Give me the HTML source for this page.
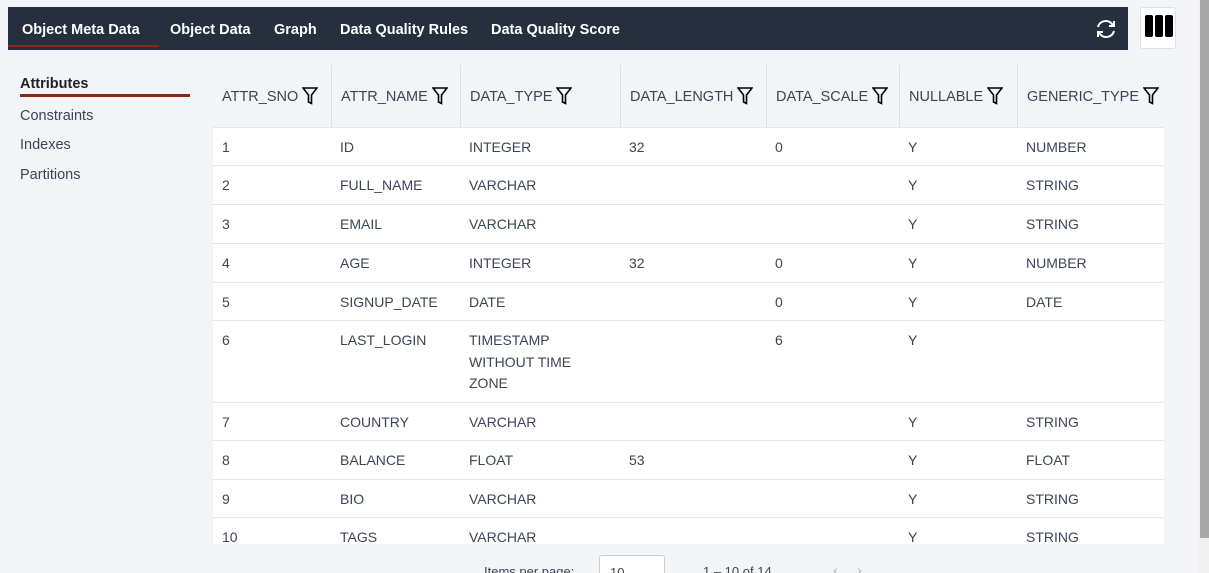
<!DOCTYPE html>
<html style="overflow:hidden"><head><style>
*{margin:0;padding:0;box-sizing:border-box}
html,body{width:1209px;height:573px;overflow:hidden}
body{background:#f2f4f8;font-family:"Liberation Sans",sans-serif;color:#3c4555;position:relative}
.nav{position:absolute;left:8px;top:7px;width:1120px;height:43px;background:#252f3e}
.nav span{position:absolute;top:15px;color:#fff;font-weight:bold;font-size:14.5px}
.ul{position:absolute;left:8px;top:45px;width:151px;height:2px;background:#8b2a14}
.colbtn{position:absolute;left:1140px;top:7px;width:36px;height:42px;background:#fff;border:1px solid #dde1e6;border-radius:3px}
.colbtn i{position:absolute;top:7px;width:8px;height:22px;background:#000;border-radius:2px}
.scroll{position:absolute;left:1198px;top:0;width:11px;height:573px;background:#f0f0f0}
.scroll div{position:absolute;left:2px;top:0;width:9px;height:538px;background:#a8a8a8}
.side{position:absolute;left:20px;font-size:14.5px}
.tbl{position:absolute;left:213px;top:65px;width:951px;height:479px;overflow:hidden}
.h{position:absolute;top:0;height:62px;font-size:14.5px;padding-top:22px;padding-left:9px;border-left:1px solid #dde1e6}
.h svg{vertical-align:-4px;margin-left:4px}
.row{position:absolute;left:0;width:951px;background:#fff;border-top:1px solid #e3e6ea}
.row span{position:absolute;top:9px;font-size:14px;line-height:21.5px}
</style></head><body>
<div class="nav">
<span style="left:14px">Object Meta Data</span>
<span style="left:162px">Object Data</span>
<span style="left:266px">Graph</span>
<span style="left:332px">Data Quality Rules</span>
<span style="left:483px">Data Quality Score</span>
<svg style="position:absolute;left:1086px;top:11px" width="24" height="22" viewBox="0 0 24 22" fill="none" stroke="#fff" stroke-width="2"><path d="M4 9a8 8 0 0 1 14-3l2 2M20 13a8 8 0 0 1-14 3l-2-2"/><path d="M20 3v5h-5M4 19v-5h5"/></svg>
</div>
<div class="ul"></div>
<div class="colbtn"><i style="left:4px"></i><i style="left:14px"></i><i style="left:24px"></i></div>
<div class="scroll"><div></div></div>
<div class="side" style="top:76px;font-weight:bold;color:#222">Attributes</div>
<div style="position:absolute;left:20px;top:94px;width:170px;height:3px;background:#8b2a14"></div>
<div class="side" style="top:108px">Constraints</div>
<div class="side" style="top:137px">Indexes</div>
<div class="side" style="top:167px">Partitions</div>
<div class="tbl">
<div class="h" style="left:0;border:0">ATTR_SNO<svg width="16" height="18" viewBox="0 0 16 18" fill="none" stroke="#000" stroke-width="1.6"><path d="M1 1h14L9.5 8v8.5l-3-1.5V8z"/></svg></div>
<div class="h" style="left:118px">ATTR_NAME<svg width="16" height="18" viewBox="0 0 16 18" fill="none" stroke="#000" stroke-width="1.6"><path d="M1 1h14L9.5 8v8.5l-3-1.5V8z"/></svg></div>
<div class="h" style="left:247px">DATA_TYPE<svg width="16" height="18" viewBox="0 0 16 18" fill="none" stroke="#000" stroke-width="1.6"><path d="M1 1h14L9.5 8v8.5l-3-1.5V8z"/></svg></div>
<div class="h" style="left:407px">DATA_LENGTH<svg width="16" height="18" viewBox="0 0 16 18" fill="none" stroke="#000" stroke-width="1.6"><path d="M1 1h14L9.5 8v8.5l-3-1.5V8z"/></svg></div>
<div class="h" style="left:553px">DATA_SCALE<svg width="16" height="18" viewBox="0 0 16 18" fill="none" stroke="#000" stroke-width="1.6"><path d="M1 1h14L9.5 8v8.5l-3-1.5V8z"/></svg></div>
<div class="h" style="left:686px">NULLABLE<svg width="16" height="18" viewBox="0 0 16 18" fill="none" stroke="#000" stroke-width="1.6"><path d="M1 1h14L9.5 8v8.5l-3-1.5V8z"/></svg></div>
<div class="h" style="left:804px">GENERIC_TYPE<svg width="16" height="18" viewBox="0 0 16 18" fill="none" stroke="#000" stroke-width="1.6"><path d="M1 1h14L9.5 8v8.5l-3-1.5V8z"/></svg></div>

<div class="row" style="top:62px;height:38px"><span style="left:9px">1</span><span style="left:127px">ID</span><span style="left:256px">INTEGER</span><span style="left:416px">32</span><span style="left:562px">0</span><span style="left:695px">Y</span><span style="left:813px">NUMBER</span></div>
<div class="row" style="top:100px;height:39px"><span style="left:9px">2</span><span style="left:127px">FULL_NAME</span><span style="left:256px">VARCHAR</span><span style="left:695px">Y</span><span style="left:813px">STRING</span></div>
<div class="row" style="top:139px;height:39px"><span style="left:9px">3</span><span style="left:127px">EMAIL</span><span style="left:256px">VARCHAR</span><span style="left:695px">Y</span><span style="left:813px">STRING</span></div>
<div class="row" style="top:178px;height:39px"><span style="left:9px">4</span><span style="left:127px">AGE</span><span style="left:256px">INTEGER</span><span style="left:416px">32</span><span style="left:562px">0</span><span style="left:695px">Y</span><span style="left:813px">NUMBER</span></div>
<div class="row" style="top:217px;height:38px"><span style="left:9px">5</span><span style="left:127px">SIGNUP_DATE</span><span style="left:256px">DATE</span><span style="left:562px">0</span><span style="left:695px">Y</span><span style="left:813px">DATE</span></div>
<div class="row" style="top:255px;height:82px"><span style="left:9px">6</span><span style="left:127px">LAST_LOGIN</span><span style="left:256px">TIMESTAMP<br>WITHOUT TIME<br>ZONE</span><span style="left:562px">6</span><span style="left:695px">Y</span></div>
<div class="row" style="top:337px;height:38px"><span style="left:9px">7</span><span style="left:127px">COUNTRY</span><span style="left:256px">VARCHAR</span><span style="left:695px">Y</span><span style="left:813px">STRING</span></div>
<div class="row" style="top:375px;height:39px"><span style="left:9px">8</span><span style="left:127px">BALANCE</span><span style="left:256px">FLOAT</span><span style="left:416px">53</span><span style="left:695px">Y</span><span style="left:813px">FLOAT</span></div>
<div class="row" style="top:414px;height:38px"><span style="left:9px">9</span><span style="left:127px">BIO</span><span style="left:256px">VARCHAR</span><span style="left:695px">Y</span><span style="left:813px">STRING</span></div>
<div class="row" style="top:452px;height:40px"><span style="left:9px">10</span><span style="left:127px">TAGS</span><span style="left:256px">VARCHAR</span><span style="left:695px">Y</span><span style="left:813px">STRING</span></div>
</div>
<div style="position:absolute;left:484px;top:564px;font-size:13px">Items per page:</div>
<div style="position:absolute;left:599px;top:555px;width:66px;height:30px;background:#fff;border:1px solid #ccc;border-radius:3px;font-size:13px;padding:9px 10px">10 &nbsp;⌄</div>
<div style="position:absolute;left:703px;top:564px;font-size:13px">1 – 10 of 14</div>
<div style="position:absolute;left:833px;top:562px;font-size:14px;color:#aaa">‹ &nbsp; &nbsp; ›</div>
</body></html>
